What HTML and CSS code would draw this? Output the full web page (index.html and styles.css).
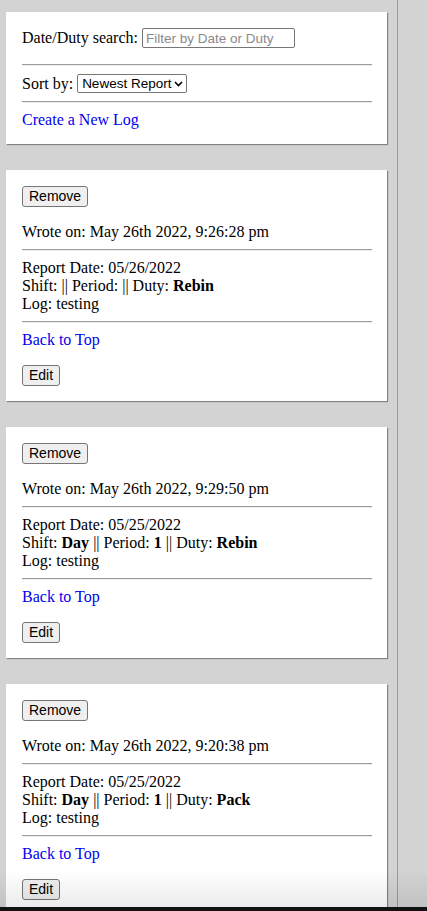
FILE: index.html
```html
<!DOCTYPE html>
<html lang="en">
<head>
<meta charset="utf-8">
<title>Logs</title>
<link rel="stylesheet" href="styles.css">
</head>
<body>
<div class="page">
  <div class="card top-card" id="top">
    <div class="row search-row">
      <label class="label">Date/Duty search:</label>
      <input class="text-input" type="text" placeholder="Filter by Date or Duty">
    </div>
    <hr class="rule">
    <div class="row sort-row">
      <label class="label">Sort by:</label>
      <span class="select">Newest Report<svg class="chev" width="9" height="6" viewBox="0 0 9 6"><path d="M1 1 L4.5 4.5 L8 1" fill="none" stroke="#000" stroke-width="1.6"/></svg></span>
    </div>
    <hr class="rule">
    <a class="link" href="#">Create a New Log</a>
  </div>

  <div class="card log-card">
    <div><button class="btn">Remove</button></div>
    <div class="wrote">Wrote on: May 26th 2022, 9:26:28 pm</div>
    <hr class="rule">
    <div class="details">
      <div>Report Date: 05/26/2022</div>
      <div>Shift: || Period: || Duty: <b>Rebin</b></div>
      <div>Log: testing</div>
    </div>
    <hr class="rule">
    <a class="link" href="#top">Back to Top</a>
    <div class="edit-row"><button class="btn">Edit</button></div>
  </div>

  <div class="card log-card">
    <div><button class="btn">Remove</button></div>
    <div class="wrote">Wrote on: May 26th 2022, 9:29:50 pm</div>
    <hr class="rule">
    <div class="details">
      <div>Report Date: 05/25/2022</div>
      <div>Shift: <b>Day</b> || Period: <b>1</b> || Duty: <b>Rebin</b></div>
      <div>Log: testing</div>
    </div>
    <hr class="rule">
    <a class="link" href="#top">Back to Top</a>
    <div class="edit-row"><button class="btn">Edit</button></div>
  </div>

  <div class="card log-card">
    <div><button class="btn">Remove</button></div>
    <div class="wrote">Wrote on: May 26th 2022, 9:20:38 pm</div>
    <hr class="rule">
    <div class="details">
      <div>Report Date: 05/25/2022</div>
      <div>Shift: <b>Day</b> || Period: <b>1</b> || Duty: <b>Pack</b></div>
      <div>Log: testing</div>
    </div>
    <hr class="rule">
    <a class="link" href="#top">Back to Top</a>
    <div class="edit-row"><button class="btn">Edit</button></div>
  </div>
</div>
<div class="bottom-fade"></div>
<div class="bottom-bar"></div>
</body>
</html>
```

FILE: styles.css
```css
html, body {
  margin: 0;
  padding: 0;
  background: #d3d3d3;
  font-family: "Liberation Serif", "Times New Roman", serif;
  font-size: 16px;
  color: #000;
  line-height: 18px;
}

.page {
  width: 391px;
  padding: 12px 0 20px 6px;
  border-right: 1px solid #9a9a9a;
  min-height: 100vh;
  box-sizing: content-box;
  display: flex;
  flex-direction: column;
  gap: 26px;
}

.card {
  width: 381px;
  box-sizing: border-box;
  background: #fff;
  padding: 16px 15px 15px 16px;
  box-shadow: 1px 1px 1px rgba(0, 0, 0, 0.38);
}

.row {
  display: flex;
  align-items: center;
  gap: 4px;
  height: 20px;
}

.search-row {
  margin-bottom: 16px;
}

.sort-row {
  margin: 8px 0;
  height: 19px;
}

.rule {
  border: 0;
  border-top: 1px solid #9c9c9c;
  border-bottom: 1px solid #ececec;
  height: 0;
  margin: 0;
}

.text-input {
  width: 153px;
  height: 20px;
  box-sizing: border-box;
  border: 1px solid #767676;
  border-radius: 2px;
  padding: 0 3px;
  font-family: "Liberation Sans", Arial, sans-serif;
  font-size: 13.5px;
  margin: 0;
}

.text-input::placeholder {
  color: #8a8a8a;
}

.select {
  display: inline-flex;
  align-items: center;
  justify-content: space-between;
  width: 110px;
  height: 19px;
  box-sizing: border-box;
  border: 1px solid #767676;
  border-radius: 2px;
  padding: 0 3px 0 4px;
  font-family: "Liberation Sans", Arial, sans-serif;
  font-size: 13.5px;
  line-height: 17px;
  background: #fff;
}

.chev {
  display: block;
}

.link {
  display: block;
  color: #0000ee;
  text-decoration: none;
  margin-top: 8px;
}

.btn {
  display: block;
  font-family: "Liberation Sans", Arial, sans-serif;
  font-size: 14px;
  line-height: 17px;
  height: 21px;
  padding: 1px 6px;
  margin: 0;
  background: #efefef;
  border: 1px solid #767676;
  border-radius: 3px;
  color: #000;
}

.wrote {
  margin: 16px 0 8px;
}

.details {
  margin: 8px 0;
}

.edit-row {
  margin-top: 16px;
}

.bottom-fade {
  position: fixed;
  left: 0;
  right: 0;
  bottom: 4px;
  height: 36px;
  background: linear-gradient(to bottom, rgba(0, 0, 0, 0), rgba(0, 0, 0, 0.08));
  pointer-events: none;
}

.bottom-bar {
  position: fixed;
  left: 0;
  right: 0;
  bottom: 0;
  height: 4px;
  background: #111;
}
```
